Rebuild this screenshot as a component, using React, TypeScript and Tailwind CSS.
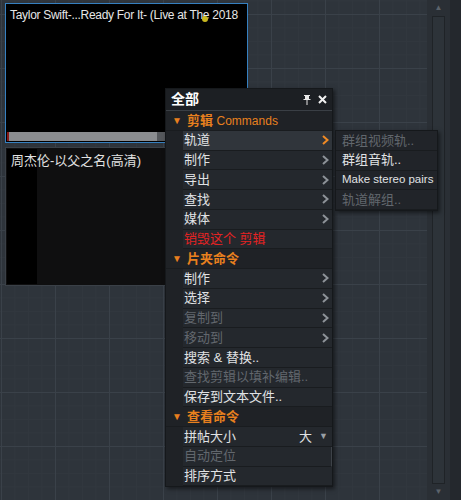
import type { ReactNode } from 'react'

const font = { fontFamily: '"Liberation Sans", "Noto Sans CJK SC", sans-serif' }

type Item = {
  label: ReactNode
  kind?: 'section' | 'item' | 'danger' | 'disabled'
  arrow?: boolean
  active?: boolean
  extra?: ReactNode
  outline?: boolean
}

const items: Item[] = [
  {
    kind: 'section',
    label: (
      <span>
        剪辑 <span className="text-[12px] font-normal">Commands</span>
      </span>
    ),
  },
  { label: '轨道', arrow: true, active: true },
  { label: '制作', arrow: true },
  { label: '导出', arrow: true },
  { label: '查找', arrow: true },
  { label: '媒体', arrow: true },
  { kind: 'danger', label: '销毁这个 剪辑' },
  { kind: 'section', label: '片夹命令' },
  { label: '制作', arrow: true },
  { label: '选择', arrow: true },
  { kind: 'disabled', label: '复制到', arrow: true },
  { kind: 'disabled', label: '移动到', arrow: true },
  { label: '搜索 & 替换..' },
  { kind: 'disabled', label: '查找剪辑以填补编辑..' },
  { label: '保存到文本文件..' },
  { kind: 'section', label: '查看命令' },
  {
    label: '拼帖大小',
    extra: (
      <span className="flex items-center gap-[7px] pr-[4px]">
        <span>大</span>
        <span className="text-[9px] text-[#9aa0a6]">▼</span>
      </span>
    ),
  },
  { kind: 'disabled', label: '自动定位', outline: true },
  { label: '排序方式' },
]

const sub = [
  { label: '群组视频轨..', disabled: true },
  { label: '群组音轨..' },
  { label: <span className="text-[11.5px]">Make stereo pairs</span> },
  { label: '轨道解组..', disabled: true },
]

function Chevron({ active }: { active?: boolean }) {
  return (
    <svg width="7" height="10" viewBox="0 0 7 10" className="mr-[3px]">
      <path
        d="M1 1 L5.5 5 L1 9"
        fill="none"
        stroke={active ? '#f08a24' : '#8d9298'}
        strokeWidth="2"
      />
    </svg>
  )
}

function MenuRow({ item }: { item: Item }) {
  if (item.kind === 'section') {
    return (
      <div className="flex h-[19.75px] items-center border-b border-[#191c1f] pl-[6px] text-[13px] font-semibold text-[#e8801e]">
        <span className="mr-[5px] text-[10px]">▼</span>
        {item.label}
      </div>
    )
  }
  const color =
    item.kind === 'danger'
      ? 'text-[#e42323]'
      : item.kind === 'disabled'
        ? 'text-[#62676d]'
        : 'text-[#e0e2e4]'
  return (
    <div className="flex h-[19.75px] pl-[17px]">
      <div
        className={`flex flex-1 items-center justify-between border-b border-[#191c1f] pl-[1px] text-[13px] ${color} ${
          item.active ? 'bg-[#30353b]' : 'bg-[#24282d]'
        } ${item.outline ? 'border-r border-r-[#3d4248]' : ''}`}
      >
        <span>{item.label}</span>
        {item.arrow && <Chevron active={item.active} />}
        {item.extra}
      </div>
    </div>
  )
}

export default function App() {
  return (
    <div className="flex h-[500px] w-[461px] overflow-hidden bg-[#2c3238]" style={font}>
      <div className="relative flex-1 bg-[#2e343b] [background-image:linear-gradient(to_right,#3a4149_1px,transparent_1px),linear-gradient(to_bottom,#3a4149_1px,transparent_1px),linear-gradient(to_right,#31373e_1px,transparent_1px),linear-gradient(to_bottom,#31373e_1px,transparent_1px)] [background-size:54px_54px,54px_54px,13.5px_13.5px,13.5px_13.5px] [background-position:1px_14px,1px_14px,1px_14px,1px_14px]">
        <div className="flex w-[248px] flex-col gap-[4px] pl-[5px] pt-[3px]">
          {/* clip 1 */}
          <div className="flex h-[140px] flex-col border border-[#3680c0] bg-black p-[1px]">
            <div className="relative flex-1 overflow-hidden whitespace-nowrap pl-[3px] pt-[3px] text-[12px] leading-[14px] tracking-[-0.3px] text-[#e6e6e6]">
              Taylor Swift-...Ready For It- (Live at The 2018
              <span className="absolute left-[195px] top-[11px] h-[6px] w-[6px] rounded-full bg-[#c8b820]" />
            </div>
            <div className="flex h-[9px]">
              <div className="w-[2px] bg-[#8a1a1a]" />
              <div className="w-[148px] bg-[#8b8d90]" />
              <div className="flex-1 bg-[#55585c]" />
            </div>
          </div>
          {/* clip 2 */}
          <div className="flex h-[139px] border border-[#3a4047] bg-[#0f0f10] p-[1px]">
            <div className="relative flex-1">
              <div className="absolute inset-y-0 left-0 w-[30px] bg-black" />
              <div className="relative whitespace-nowrap pl-[4px] pt-[4px] text-[13px] leading-[15px] text-[#e2e2e2]">
                周杰伦-以父之名(高清)
              </div>
            </div>
          </div>
        </div>

        {/* context menu */}
        <div className="absolute left-[165px] top-[88px] w-[168px] border border-[#15181b] bg-[#1f2226] shadow-[2px_2px_4px_rgba(0,0,0,0.5)]">
          <div className="flex h-[22px] items-center justify-between border-b border-[#3a3f45] bg-[#1c1f23] pl-[5px] pr-[5px]">
            <span className="text-[14px] font-bold text-white">全部</span>
            <span className="flex items-center gap-[7px]">
              <svg width="8" height="11" viewBox="0 0 8 11">
                <path d="M1 1 H7 V2 H6 V5 H7.5 V6 H0.5 V5 H2 V2 H1 Z" fill="#e8e8e8" />
                <rect x="3.5" y="6" width="1" height="5" fill="#e8e8e8" />
              </svg>
              <svg width="9" height="9" viewBox="0 0 9 9">
                <path d="M1 1 L8 8 M8 1 L1 8" stroke="#f0f0f0" strokeWidth="2" />
              </svg>
            </span>
          </div>
          {items.map((it, i) => (
            <MenuRow key={i} item={it} />
          ))}
        </div>

        {/* submenu */}
        <div className="absolute left-[335px] top-[130px] w-[103px] border border-[#15181b] bg-[#212429] shadow-[2px_2px_4px_rgba(0,0,0,0.5)]">
          {sub.map((s, i) => (
            <div
              key={i}
              className={`flex h-[19.75px] items-center whitespace-nowrap border-b border-[#191c1f] pl-[6px] text-[13px] ${
                s.disabled ? 'text-[#62676d]' : 'text-[#e0e2e4]'
              }`}
            >
              {s.label}
            </div>
          ))}
        </div>
      </div>

      {/* scrollbar */}
      <div className="flex w-[23px] flex-col items-center bg-[#2a2f35] pb-[3px] pt-[3px]">
        <span className="text-[8px] leading-[10px] text-[#5c636b]">▲</span>
        <div className="my-[3px] w-[13px] flex-1 border border-[#1f2327] bg-[#2d3339]" />
        <span className="text-[8px] leading-[10px] text-[#5c636b]">▼</span>
      </div>
      <div className="w-[11px] bg-[#24282d]" />
    </div>
  )
}
